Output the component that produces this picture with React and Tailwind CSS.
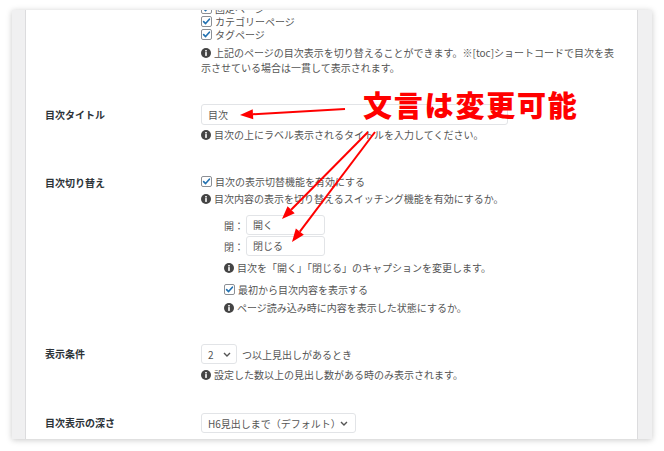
import React from 'react';

const Check = () => (
  <svg width="11" height="11" viewBox="0 0 11 11" className="shrink-0">
    <rect x="0.5" y="0.5" width="10" height="10" rx="1.5" fill="#fff" stroke="#8c8f94" />
    <path d="M2.6 5.6 L4.6 7.6 L8.4 3.2" fill="none" stroke="#2271b1" strokeWidth="1.6" strokeLinecap="round" strokeLinejoin="round" />
  </svg>
);

const Info = () => (
  <svg width="10" height="10" viewBox="0 0 10 10" className="inline-block align-[-1px] mr-[3px]">
    <circle cx="5" cy="5" r="5" fill="#444" />
    <rect x="4.2" y="4.1" width="1.6" height="3.8" fill="#fff" />
    <rect x="4.2" y="2" width="1.6" height="1.5" fill="#fff" />
  </svg>
);

const Chevron = () => (
  <svg width="8" height="5" viewBox="0 0 8 5">
    <path d="M1 1 L4 4 L7 1" fill="none" stroke="#555" strokeWidth="1.4" />
  </svg>
);

// red arrow with filled head at the tip
const Arrow = ({ from, to }) => {
  const [ax, ay] = from;
  const [tx, ty] = to;
  const len = Math.hypot(tx - ax, ty - ay);
  const dx = (tx - ax) / len;
  const dy = (ty - ay) / len;
  const L = 13;
  const W = 5;
  const bx = tx - L * dx;
  const by = ty - L * dy;
  const pts = `${tx},${ty} ${bx - W * dy},${by + W * dx} ${bx + W * dy},${by - W * dx}`;
  return (
    <g>
      <line x1={ax} y1={ay} x2={bx} y2={by} stroke="#ff0000" strokeWidth="2" />
      <polygon points={pts} fill="#ff0000" />
    </g>
  );
};

const CheckRow = ({ children, className = '' }) => (
  <div className={`flex items-center gap-[3px] ${className}`}>
    <Check />
    <span className="leading-[13px]">{children}</span>
  </div>
);

export default function App() {
  return (
    <div className="relative w-[664px] h-[451px] bg-white overflow-hidden font-['Noto_Sans_CJK_JP','Noto_Sans',sans-serif] text-[10px] text-[#555]">
      <div className="ml-[12px] mt-[10px] w-[640px] h-[429px] flex overflow-hidden shadow-[0_1px_6px_rgba(0,0,0,0.22)]">
        <div className="w-[14px] shrink-0 bg-[#f0f0f1] border-r border-[#dcdcde]" />

        <div className="flex-1 bg-white pl-[19px]">
          {/* pages to show toc on (top is cut off) */}
          <div className="flex -mt-[8px]">
            <div className="w-[156px] shrink-0" />
            <div>
              <CheckRow className="h-[13px]">固定ページ</CheckRow>
              <CheckRow className="h-[13px]">カテゴリーページ</CheckRow>
              <CheckRow className="h-[13px]">タグページ</CheckRow>
              <p className="mt-[4px] leading-[15px]">
                <Info />上記のページの目次表示を切り替えることができます。※[toc]ショートコードで目次を表<br />
                示させている場合は一貫して表示されます。
              </p>
            </div>
          </div>

          {/* toc title */}
          <div className="flex mt-[29px]">
            <div className="w-[156px] shrink-0 font-bold text-[#2c3338] leading-[21px]">目次タイトル</div>
            <div>
              <div className="w-[307px] h-[21px] border border-[#e2e4e7] rounded-[3px] px-[6px] leading-[19px] text-[#555]">目次</div>
              <p className="mt-[2px] leading-[15px]"><Info />目次の上にラベル表示されるタイトルを入力してください。</p>
            </div>
          </div>

          {/* toc toggle */}
          <div className="flex mt-[31px]">
            <div className="w-[156px] shrink-0 font-bold text-[#2c3338] leading-[16px] pt-[2px]">目次切り替え</div>
            <div>
              <CheckRow className="h-[16px]">目次の表示切替機能を有効にする</CheckRow>
              <p className="mt-[2px] leading-[16px]"><Info />目次内容の表示を切り替えるスイッチング機能を有効にするか。</p>
              <div className="pl-[23px]">
                <div className="flex items-center mt-[8px]">
                  <span className="w-[22px]">開：</span>
                  <div className="w-[79px] h-[20px] border border-[#e2e4e7] rounded-[3px] px-[6px] leading-[18px]">開く</div>
                </div>
                <div className="flex items-center mt-[1px]">
                  <span className="w-[22px]">閉：</span>
                  <div className="w-[79px] h-[20px] border border-[#e2e4e7] rounded-[3px] px-[6px] leading-[18px]">閉じる</div>
                </div>
                <p className="mt-[4px] leading-[15px]"><Info />目次を「開く」「閉じる」のキャプションを変更します。</p>
                <CheckRow className="mt-[7px] h-[15px]">最初から目次内容を表示する</CheckRow>
                <p className="mt-[3px] leading-[15px]"><Info />ページ読み込み時に内容を表示した状態にするか。</p>
              </div>
            </div>
          </div>

          {/* display condition */}
          <div className="flex mt-[29px]">
            <div className="w-[156px] shrink-0 font-bold text-[#2c3338] leading-[20px]">表示条件</div>
            <div>
              <div className="flex items-center gap-[5px]">
                <div className="w-[36px] h-[20px] border border-[#e2e4e7] rounded-[3px] pl-[6px] pr-[5px] flex items-center justify-between">
                  <span>2</span>
                  <Chevron />
                </div>
                <span>つ以上見出しがあるとき</span>
              </div>
              <p className="mt-[3px] leading-[15px]"><Info />設定した数以上の見出し数がある時のみ表示されます。</p>
            </div>
          </div>

          {/* depth */}
          <div className="flex mt-[31px]">
            <div className="w-[156px] shrink-0 font-bold text-[#2c3338] leading-[20px]">目次表示の深さ</div>
            <div className="w-[155px] h-[20px] border border-[#e2e4e7] rounded-[3px] pl-[6px] pr-[7px] flex items-center justify-between">
              <span>H6見出しまで（デフォルト）</span>
              <Chevron />
            </div>
          </div>
        </div>

        <div className="w-[15px] shrink-0 bg-[#f0f0f1] border-l border-[#dcdcde]" />
      </div>

      {/* annotation overlay */}
      <div className="absolute left-[363px] top-[86px] text-[29px] leading-[36px] font-black tracking-[1.8px] text-[#ff0000] whitespace-nowrap">
        文言は変更可能
      </div>
      <svg className="absolute left-0 top-0 pointer-events-none" width="664" height="451">
        <Arrow from={[345, 109]} to={[240, 115]} />
        <Arrow from={[368, 132]} to={[282, 219]} />
        <Arrow from={[375, 132]} to={[292, 242]} />
      </svg>
    </div>
  );
}
